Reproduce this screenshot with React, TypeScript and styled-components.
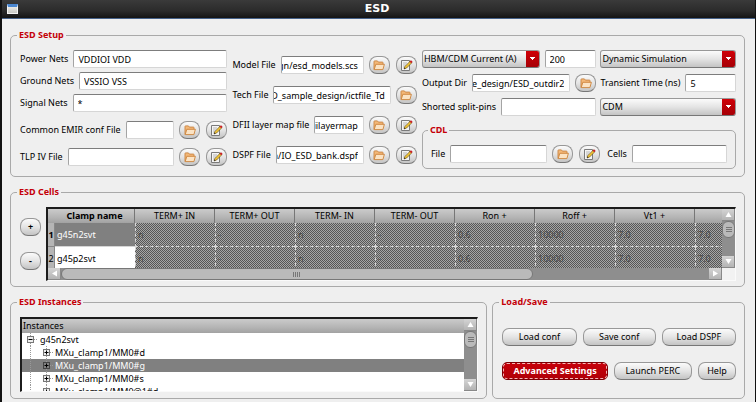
import React from "react";
import styled, { createGlobalStyle, css } from "styled-components";

const Global = createGlobalStyle`
  * { box-sizing: border-box; }
  html, body, #root { height: 100%; }
  body { margin: 0; background: #efefef; overflow: hidden; }
  body, input, button, select, table { font-family: "Noto Sans", "Open Sans", sans-serif; font-size: 9px; line-height: 14px; color: #000; }
`;

const Window = styled.div`
  min-height: 100%;
  display: flex;
  flex-direction: column;
  border-left: 2px solid #111;
  border-right: 1px solid #111;
  background: #efefef;
`;

const TitleBar = styled.header`
  display: flex;
  align-items: center;
  height: 19px;
  padding: 0 5px;
  background: linear-gradient(#3a3a3a, #2b2b2b 60%, #141414);
  border-bottom: 1px solid #46628a;
  color: #fff;
`;

const Title = styled.h1`
  flex: 1;
  margin: 0;
  padding-right: 14px;
  text-align: center;
  font-family: "DejaVu Sans", sans-serif;
  font-size: 11px;
  line-height: 18px;
`;

const WindowIcon = styled.span`
  width: 11px;
  height: 10px;
  background: linear-gradient(#e8e8e4, #c9c9c4);
  border: 1px solid #f4f4f4;
  border-top: 3px solid #4a86cf;
`;

const Main = styled.main`
  display: flex;
  flex-direction: column;
  gap: 8px;
  padding: 9px 10px 3px 8px;
`;

const Group = styled.fieldset<{ $pad: string }>`
  min-width: 0;
  margin: 0;
  padding: ${(p) => p.$pad};
  border: 1px solid #a9a9a9;
  border-radius: 5px;
`;

const Legend = styled.legend`
  margin-left: -3px;
  padding: 0 2px;
  color: #c40008;
  font-weight: 700;
  line-height: 14px;
`;

const SetupGrid = styled.div`
  display: grid;
  grid-template-columns: 208fr 185fr 315fr;
  gap: 5px;
  align-items: start;
`;

const Column = styled.div<{ $gap: number; $top?: number }>`
  display: flex;
  flex-direction: column;
  gap: ${(p) => p.$gap}px;
  padding-top: ${(p) => p.$top ?? 0}px;
`;

const Row = styled.div<{ $grow?: number }>`
  display: flex;
  align-items: center;
  gap: 5px;
  min-width: 0;
  ${(p) => p.$grow && css`flex: ${p.$grow} 1 0;`}
`;

const Label = styled.label`
  white-space: nowrap;
`;

const TextBox = styled.input<{ $end?: boolean; $grow?: number }>`
  flex: ${(p) => p.$grow ?? 1} 1 0;
  min-width: 0;
  width: 0;
  height: 18px;
  padding: 0 4px;
  border: 1px solid #d6d6d6;
  border-top: 1px solid #7d7d7d;
  border-left-color: #a4a4a4;
  border-radius: 2px;
  background: #fff;
  outline: none;
  ${(p) => p.$end && css`direction: rtl; text-align: right; padding: 0 5px 0 0;`}
`;

const raised = css`
  border: 1px solid #989898;
  border-bottom-color: #777;
  background: linear-gradient(#fbfbfb, #e4e4e4 50%, #c4c4c4);
`;

const Small = styled.button`
  ${raised}
  flex: none;
  display: flex;
  align-items: center;
  justify-content: center;
  width: 21px;
  height: 18px;
  padding: 0;
  border-radius: 8px;
  font-weight: 700;
`;

const IconPair = styled.div`
  display: flex;
  gap: 6px;
`;

const SelectWrap = styled.div<{ $grow?: number }>`
  ${raised}
  display: flex;
  min-width: 0;
  height: 18px;
  border-radius: 3px;
  overflow: hidden;
  flex: ${(p) => p.$grow ?? 1} 1 0;
`;

const Select = styled.select`
  appearance: none;
  flex: 1;
  min-width: 0;
  padding: 0 13px 0 1px;
  border: 0;
  outline: none;
  background:
    linear-gradient(#fff, #fff) right 4px top 6px / 5px 1px no-repeat,
    linear-gradient(#fff, #fff) right 5px top 7px / 3px 1px no-repeat,
    linear-gradient(#fff, #fff) right 6px top 8px / 1px 1px no-repeat,
    linear-gradient(#cf0007, #a60006) right / 13px 100% no-repeat;
`;

const PairGrid = styled.div`
  display: grid;
  grid-template-columns: 175fr 136fr;
  gap: 6px 4px;
`;

const CdlRow = styled.div`
  display: flex;
  gap: 7px;
`;

const CellsLayout = styled.div`
  display: flex;
  gap: 5px;
  align-items: flex-start;
`;

const Steppers = styled.div`
  display: flex;
  flex-direction: column;
  gap: 16px;
  padding-top: 11px;
`;

const Frame = styled.div`
  flex: 1;
  min-width: 0;
  display: grid;
  grid-template-columns: minmax(0, 1fr) 13px;
  border: 1px solid #fafafa;
  border-top: 2px solid #1c1c1c;
  border-left: 2px solid #1c1c1c;
  background: #f2f2f2;
`;

const Viewport = styled.div<{ $h: number }>`
  height: ${(p) => p.$h}px;
  overflow: hidden;
  background: #fff;
`;

const Table = styled.table`
  width: 727px;
  table-layout: fixed;
  border-collapse: separate;
  border-spacing: 0;
`;

const headFill = css`
  background: linear-gradient(#cbcbcb, #b4b4b4 60%, #a2a2a2);
`;

const HeadCell = styled.th<{ $strong?: boolean }>`
  ${headFill}
  height: 14px;
  padding: 0;
  border-right: 1px solid #777;
  font-weight: ${(p) => (p.$strong ? 700 : 400)};
`;

const Corner = styled.td`
  ${headFill}
  padding: 0;
`;

const RowHead = styled.th<{ $strong?: boolean }>`
  height: 24px;
  padding: 0;
  background: #b5b5b5;
  border-right: 1px solid #888;
  border-bottom: 1px solid #888;
  font-weight: ${(p) => (p.$strong ? 700 : 400)};
`;

const NameCell = styled.td<{ $selected?: boolean }>`
  height: 24px;
  padding: 0 2px;
  border-bottom: 1px solid #d5d5d5;
  background: ${(p) => (p.$selected ? "#808080" : "#fff")};
  color: ${(p) => (p.$selected ? "#fff" : "#000")};
`;

const LockedCell = styled.td`
  height: 24px;
  padding: 0 2px;
  border-left: 1px dashed #d8d8d8;
  border-bottom: 1px dashed #d8d8d8;
  background: repeating-conic-gradient(#565656 0 25%, #a6a6a6 0 50%) 0 0 / 2px 2px;
  color: #484848;
`;

const Track = styled.div<{ $row?: boolean }>`
  display: flex;
  flex-direction: ${(p) => (p.$row ? "row" : "column")};
  ${(p) => (p.$row ? "height: 12px;" : "width: 13px;")}
  background: #8e8e8e;
`;

const Arrow = styled.button`
  flex: none;
  display: flex;
  align-items: center;
  justify-content: center;
  width: 13px;
  height: 12px;
  padding: 0;
  border: 0;
  border-right: 1px solid #888;
  border-bottom: 1px solid #888;
  background: linear-gradient(#d4d4d4, #b4b4b4);
`;

const Thumb = styled.div<{ $row?: boolean }>`
  flex: none;
  display: flex;
  align-items: center;
  justify-content: center;
  border: 1px solid #777;
  border-radius: 6px;
  background: #bababa;
  ${(p) => (p.$row ? "width: 70%;" : "height: 17px;")}
`;

const Spacer = styled.div`
  flex: 1;
`;

const Lower = styled.div`
  display: grid;
  grid-template-columns: 478fr 253fr;
  gap: 5px;
`;

const TreeHead = styled.div`
  ${headFill}
  height: 14px;
  padding-left: 1px;
`;

const Tree = styled.ul`
  margin: 0;
  padding: 0;
  list-style: none;
`;

const TreeItem = styled.li<{ $selected?: boolean }>`
  display: flex;
  align-items: center;
  height: 13px;
  line-height: 13px;
  background: ${(p) => (p.$selected ? "#808080" : "transparent")};
  color: ${(p) => (p.$selected ? "#fff" : "#000")};
`;

const Actions = styled.div<{ $top: number }>`
  display: flex;
  gap: 6px;
  padding-top: ${(p) => p.$top}px;
`;

const Push = styled.button<{ $grow: number; $primary?: boolean }>`
  ${raised}
  flex: ${(p) => p.$grow} 1 0;
  height: 18px;
  padding: 0;
  border-radius: 7px;
  line-height: 14px;
  white-space: nowrap;
  ${(p) =>
    p.$primary &&
    css`
      background: linear-gradient(#c8000a, #b00008);
      border-color: #7a0006;
      border-radius: 5px;
      outline: 1px dashed #f3b8b8;
      outline-offset: -2px;
      color: #fff;
      font-weight: 700;
    `}
`;

const FolderIcon = () => (
  <svg width="12" height="11" viewBox="0 0 12 11" aria-hidden="true">
    <path d="M1 9.5V1.5q0-.6.6-.6h2.8l1 1.2h4q.6 0 .6.6v2" fill="#f3b878" stroke="#c88240" strokeWidth=".9" />
    <path d="M2.8 4.3h8.6L9.9 9.6H1.2z" fill="#fbe3c4" stroke="#cc8238" strokeWidth=".9" strokeLinejoin="round" />
  </svg>
);

const EditIcon = () => (
  <svg width="13" height="13" viewBox="0 0 13 13" aria-hidden="true">
    <path d="M1.5 1.5h8v10h-8z" fill="#f4f4f4" stroke="#7a7a7a" />
    <path d="M3 4h4M3 6h3M3 8h2" stroke="#aaa" strokeWidth=".8" />
    <path d="M4 10l1-2.6L10.3 2 12 3.6 6.6 9z" fill="#f0c433" stroke="#5a4210" strokeWidth=".6" />
    <path d="M9.6 2.7L11 1.2l1.6 1.5L11.3 4.2z" fill="#c8202a" />
    <path d="M4 10l.6-1.5.9.9z" fill="#222" />
  </svg>
);

const Arrowhead = ({ d }: { d: string }) => (
  <svg width="7" height="7" viewBox="0 0 7 7" aria-hidden="true">
    <path d={d} fill="#fff" />
  </svg>
);

const Grip = ({ row }: { row?: boolean }) => (
  <svg width="8" height="6" viewBox="0 0 8 6" aria-hidden="true">
    <path d={row ? "M.5 1v5M2.5 1v5M4.5 1v5M6.5 1v5" : "M1 .5h6M1 2.5h6M1 4.5h6"} stroke="#777" />
  </svg>
);

const Browse = ({ of }: { of: string }) => (
  <Small type="button" aria-label={`Browse ${of}`}><FolderIcon /></Small>
);
const Edit = ({ of }: { of: string }) => (
  <Small type="button" aria-label={`Edit ${of}`}><EditIcon /></Small>
);

type FieldProps = {
  id: string;
  label: string;
  value?: string;
  browse?: boolean;
  edit?: boolean;
  end?: boolean;
  grow?: number;
};

const Field = ({ id, label, value = "", browse, edit, end, grow }: FieldProps) => (
  <Row $grow={grow}>
    <Label htmlFor={id}>{label}</Label>
    <TextBox id={id} defaultValue={value} $end={end} />
    {browse && (
      <IconPair>
        <Browse of={label} />
        {edit && <Edit of={label} />}
      </IconPair>
    )}
  </Row>
);

const Choice = ({ name, value, grow }: { name: string; value: string; grow?: number }) => (
  <SelectWrap $grow={grow}>
    <Select aria-label={name} defaultValue={value}>
      <option>{value}</option>
    </Select>
  </SelectWrap>
);

const VScroll = () => (
  <Track>
    <Arrow type="button" aria-label="Scroll up"><Arrowhead d="M3.5 1L6.5 6h-6z" /></Arrow>
    <Thumb><Grip /></Thumb>
    <Spacer />
    <Arrow type="button" aria-label="Scroll down"><Arrowhead d="M3.5 6L6.5 1h-6z" /></Arrow>
  </Track>
);

const Node = ({ child, selected }: { child?: boolean; selected?: boolean }) => (
  <svg width={child ? 33 : 18} height="13" viewBox={`0 0 ${child ? 33 : 18} 13`} aria-hidden="true">
    <path
      d={child ? "M8.5 0v13M24.5 0v13M28 6.5h4" : "M8.5 0v13M12 6.5h4"}
      stroke="#999"
      strokeDasharray="1 1"
      fill="none"
    />
    <rect x={child ? 21.5 : 5.5} y="3.5" width="6" height="6" fill={selected ? "#808080" : "#eee"} stroke={selected ? "#444" : "#777"} />
    <path d={child ? "M22.5 6.5h4M24.5 4.5v4" : "M6.5 6.5h4"} stroke="#000" />
  </svg>
);

const headers = ["TERM+ IN", "TERM+ OUT", "TERM- IN", "TERM- OUT", "Ron +", "Roff +", "Vt1 +", ""];
const locked = ["n", "-", "n", "-", "0.6", "10000", "7.0", "7.0"];
const clamps = ["g45n2svt", "g45p2svt"];
const instances = ["MXu_clamp1/MM0#d", "MXu_clamp1/MM0#g", "MXu_clamp1/MM0#s", "MXu_clamp1/MM0@1#d"];

export default function App() {
  return (
    <>
      <Global />
      <Window>
        <TitleBar>
          <WindowIcon />
          <Title>ESD</Title>
        </TitleBar>
        <Main>
          <Group $pad="8px 8px 7px 9px">
            <Legend>ESD Setup</Legend>
            <SetupGrid>
              <Column $gap={9}>
                <Column $gap={4}>
                  <Field id="power" label="Power Nets" value="VDDIOI VDD" />
                  <Field id="ground" label="Ground Nets" value="VSSIO VSS" />
                  <Field id="signal" label="Signal Nets" value="*" />
                </Column>
                <Field id="emir" label="Common EMIR conf File" browse edit />
                <Field id="tlp" label="TLP IV File" browse edit />
              </Column>
              <Column $gap={12} $top={6}>
                <Field id="model" label="Model File" value="gn/esd_models.scs" browse edit end />
                <Field id="tech" label="Tech File" value="D_sample_design/ictfile_Td" browse end />
                <Field id="dfii" label="DFII layer map file" value="fiilayermap" browse edit end />
                <Field id="dspf" label="DSPF File" value="n/IO_ESD_bank.dspf" browse edit end />
              </Column>
              <Column $gap={7}>
                <PairGrid>
                  <Row>
                    <Choice name="Current mode" value="HBM/CDM Current (A)" grow={116} />
                    <TextBox aria-label="Current" defaultValue="200" $grow={42} />
                  </Row>
                  <Choice name="Simulation" value="Dynamic Simulation" />
                  <Field id="out" label="Output Dir" value="le_design/ESD_outdir2" browse end />
                  <Field id="time" label="Transient Time (ns)" value="5" />
                  <Field id="pins" label="Shorted split-pins" />
                  <Choice name="Model" value="CDM" />
                </PairGrid>
                <Group $pad="8px 8px 5px 8px">
                  <Legend>CDL</Legend>
                  <CdlRow>
                    <Field id="cdl" label="File" browse edit grow={171} />
                    <Field id="cells" label="Cells" grow={121} />
                  </CdlRow>
                </Group>
              </Column>
            </SetupGrid>
          </Group>
          <Group $pad="8px 8px 5px 9px">
            <Legend>ESD Cells</Legend>
            <CellsLayout>
              <Steppers>
                <Small type="button">+</Small>
                <Small type="button">-</Small>
              </Steppers>
              <Frame>
                <Viewport $h={59}>
                  <Table>
                    <colgroup>
                      <col width="7" />
                      <col width="80" />
                      {headers.map((h, i) => <col key={i} width="80" />)}
                    </colgroup>
                    <thead>
                      <tr>
                        <Corner />
                        <HeadCell $strong>Clamp name</HeadCell>
                        {headers.map((h, i) => <HeadCell key={i}>{h}</HeadCell>)}
                      </tr>
                    </thead>
                    <tbody>
                      {clamps.map((c, r) => (
                        <tr key={c}>
                          <RowHead $strong={r === 0}>{r + 1}</RowHead>
                          <NameCell $selected={r === 0}>{c}</NameCell>
                          {locked.map((v, i) => <LockedCell key={i}>{v}</LockedCell>)}
                        </tr>
                      ))}
                    </tbody>
                  </Table>
                </Viewport>
                <VScroll />
                <Track $row>
                  <Arrow type="button" aria-label="Scroll left"><Arrowhead d="M1 3.5L6 .5v6z" /></Arrow>
                  <Thumb $row><Grip row /></Thumb>
                  <Spacer />
                  <Arrow type="button" aria-label="Scroll right"><Arrowhead d="M6 3.5L1 .5v6z" /></Arrow>
                </Track>
              </Frame>
            </CellsLayout>
          </Group>
          <Lower>
            <Group $pad="8px 8px 6px 9px">
              <Legend>ESD Instances</Legend>
              <Frame>
                <Viewport $h={72}>
                  <TreeHead>Instances</TreeHead>
                  <Tree>
                    <TreeItem><Node />g45n2svt</TreeItem>
                    {instances.map((n, i) => (
                      <TreeItem key={n} $selected={i === 1}><Node child selected={i === 1} />{n}</TreeItem>
                    ))}
                  </Tree>
                </Viewport>
                <VScroll />
              </Frame>
            </Group>
            <Group $pad="0 8px 6px 9px">
              <Legend>Load/Save</Legend>
              <Actions $top={19}>
                <Push type="button" $grow={74}>Load conf</Push>
                <Push type="button" $grow={73}>Save conf</Push>
                <Push type="button" $grow={74}>Load DSPF</Push>
              </Actions>
              <Actions $top={16}>
                <Push type="button" $grow={106} $primary>Advanced Settings</Push>
                <Push type="button" $grow={78}>Launch PERC</Push>
                <Push type="button" $grow={37}>Help</Push>
              </Actions>
            </Group>
          </Lower>
        </Main>
      </Window>
    </>
  );
}
